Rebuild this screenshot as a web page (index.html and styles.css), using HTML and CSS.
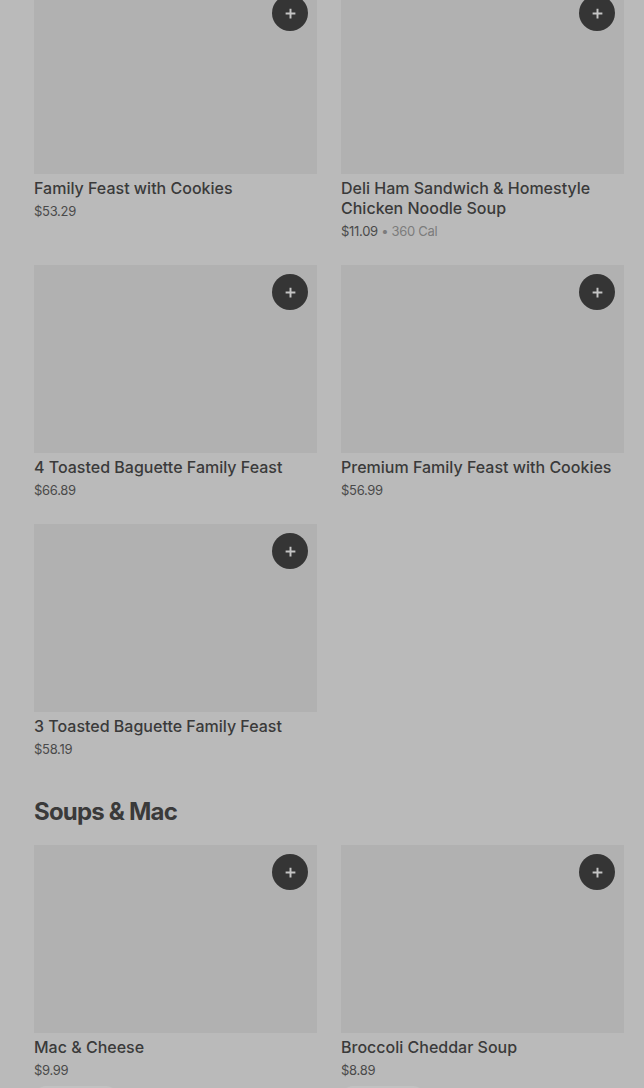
FILE: index.html
```html
<!DOCTYPE html>
<html lang="en">
<head>
  <meta charset="UTF-8">
  <title>Menu</title>
  <link rel="stylesheet" href="styles.css">
</head>
<body>
  <main class="menu">
    <!-- Family Feasts (scrolled) -->
    <section class="section first">
      <div class="grid">
        <div class="item">
          <div class="photo"><button class="add" aria-label="Add"><svg viewBox="0 0 16 16"><path d="M8 2v12M2 8h12"/></svg></button></div>
          <div class="name">Family Feast with Cookies</div>
          <div class="meta">$53.29</div>
        </div>
        <div class="item">
          <div class="photo"><button class="add" aria-label="Add"><svg viewBox="0 0 16 16"><path d="M8 2v12M2 8h12"/></svg></button></div>
          <div class="name">Deli Ham Sandwich &amp; Homestyle Chicken Noodle Soup</div>
          <div class="meta">$11.09 <span class="cal">• 360 Cal</span></div>
        </div>
        <div class="item">
          <div class="photo"><button class="add" aria-label="Add"><svg viewBox="0 0 16 16"><path d="M8 2v12M2 8h12"/></svg></button></div>
          <div class="name">4 Toasted Baguette Family Feast</div>
          <div class="meta">$66.89</div>
        </div>
        <div class="item">
          <div class="photo"><button class="add" aria-label="Add"><svg viewBox="0 0 16 16"><path d="M8 2v12M2 8h12"/></svg></button></div>
          <div class="name">Premium Family Feast with Cookies</div>
          <div class="meta">$56.99</div>
        </div>
        <div class="item">
          <div class="photo"><button class="add" aria-label="Add"><svg viewBox="0 0 16 16"><path d="M8 2v12M2 8h12"/></svg></button></div>
          <div class="name">3 Toasted Baguette Family Feast</div>
          <div class="meta">$58.19</div>
        </div>
      </div>
    </section>

    <section class="section">
      <h2>Soups &amp; Mac</h2>
      <div class="grid">
        <div class="item">
          <div class="photo"><button class="add" aria-label="Add"><svg viewBox="0 0 16 16"><path d="M8 2v12M2 8h12"/></svg></button></div>
          <div class="name">Mac &amp; Cheese</div>
          <div class="meta">$9.99</div>
          <div class="tag"></div>
        </div>
        <div class="item">
          <div class="photo"><button class="add" aria-label="Add"><svg viewBox="0 0 16 16"><path d="M8 2v12M2 8h12"/></svg></button></div>
          <div class="name">Broccoli Cheddar Soup</div>
          <div class="meta">$8.89</div>
          <div class="tag"></div>
        </div>
      </div>
    </section>
  </main>
</body>
</html>
```

FILE: styles.css
```css
body {
  margin: 0;
  background: #bababa;
  font-family: Inter, Roboto, "Liberation Sans", sans-serif;
  color: #383838;
  overflow: hidden;
}
.menu {
  padding: 0 20px 0 34px;
}
.section.first {
  margin-top: -14px;
}
.section {
  margin-bottom: 38px;
}
.section h2 {
  margin: 0 0 17px;
  font-size: 24px;
  line-height: 32px;
  font-weight: 700;
  letter-spacing: -0.8px;
  color: #3a3a3a;
}
.grid {
  display: grid;
  grid-template-columns: 1fr 1fr;
  column-gap: 24px;
  row-gap: 25px;
}
.photo {
  position: relative;
  height: 188px;
  background: #b1b1b1;
}
.add {
  position: absolute;
  top: 9px;
  right: 9px;
  width: 36px;
  height: 36px;
  border: 0;
  border-radius: 50%;
  background: #353535;
  padding: 0;
  display: flex;
  align-items: center;
  justify-content: center;
}
.add svg {
  width: 13px;
  height: 13px;
  stroke: #c4c4c4;
  stroke-width: 2.4;
  fill: none;
}
.name {
  margin-top: 4px;
  font-size: 16px;
  line-height: 20px;
  font-weight: 500;
  letter-spacing: 0;
  color: #3a3a3a;
}
.meta {
  margin-top: 4px;
  font-size: 13px;
  line-height: 18px;
  color: #4a4a4a;
  letter-spacing: -0.3px;
}
.cal {
  color: #7c7c7c;
}
.tag {
  margin-top: 7px;
  width: 84px;
  height: 24px;
  border-radius: 12px;
  background: #c2c2c2;
}
```
